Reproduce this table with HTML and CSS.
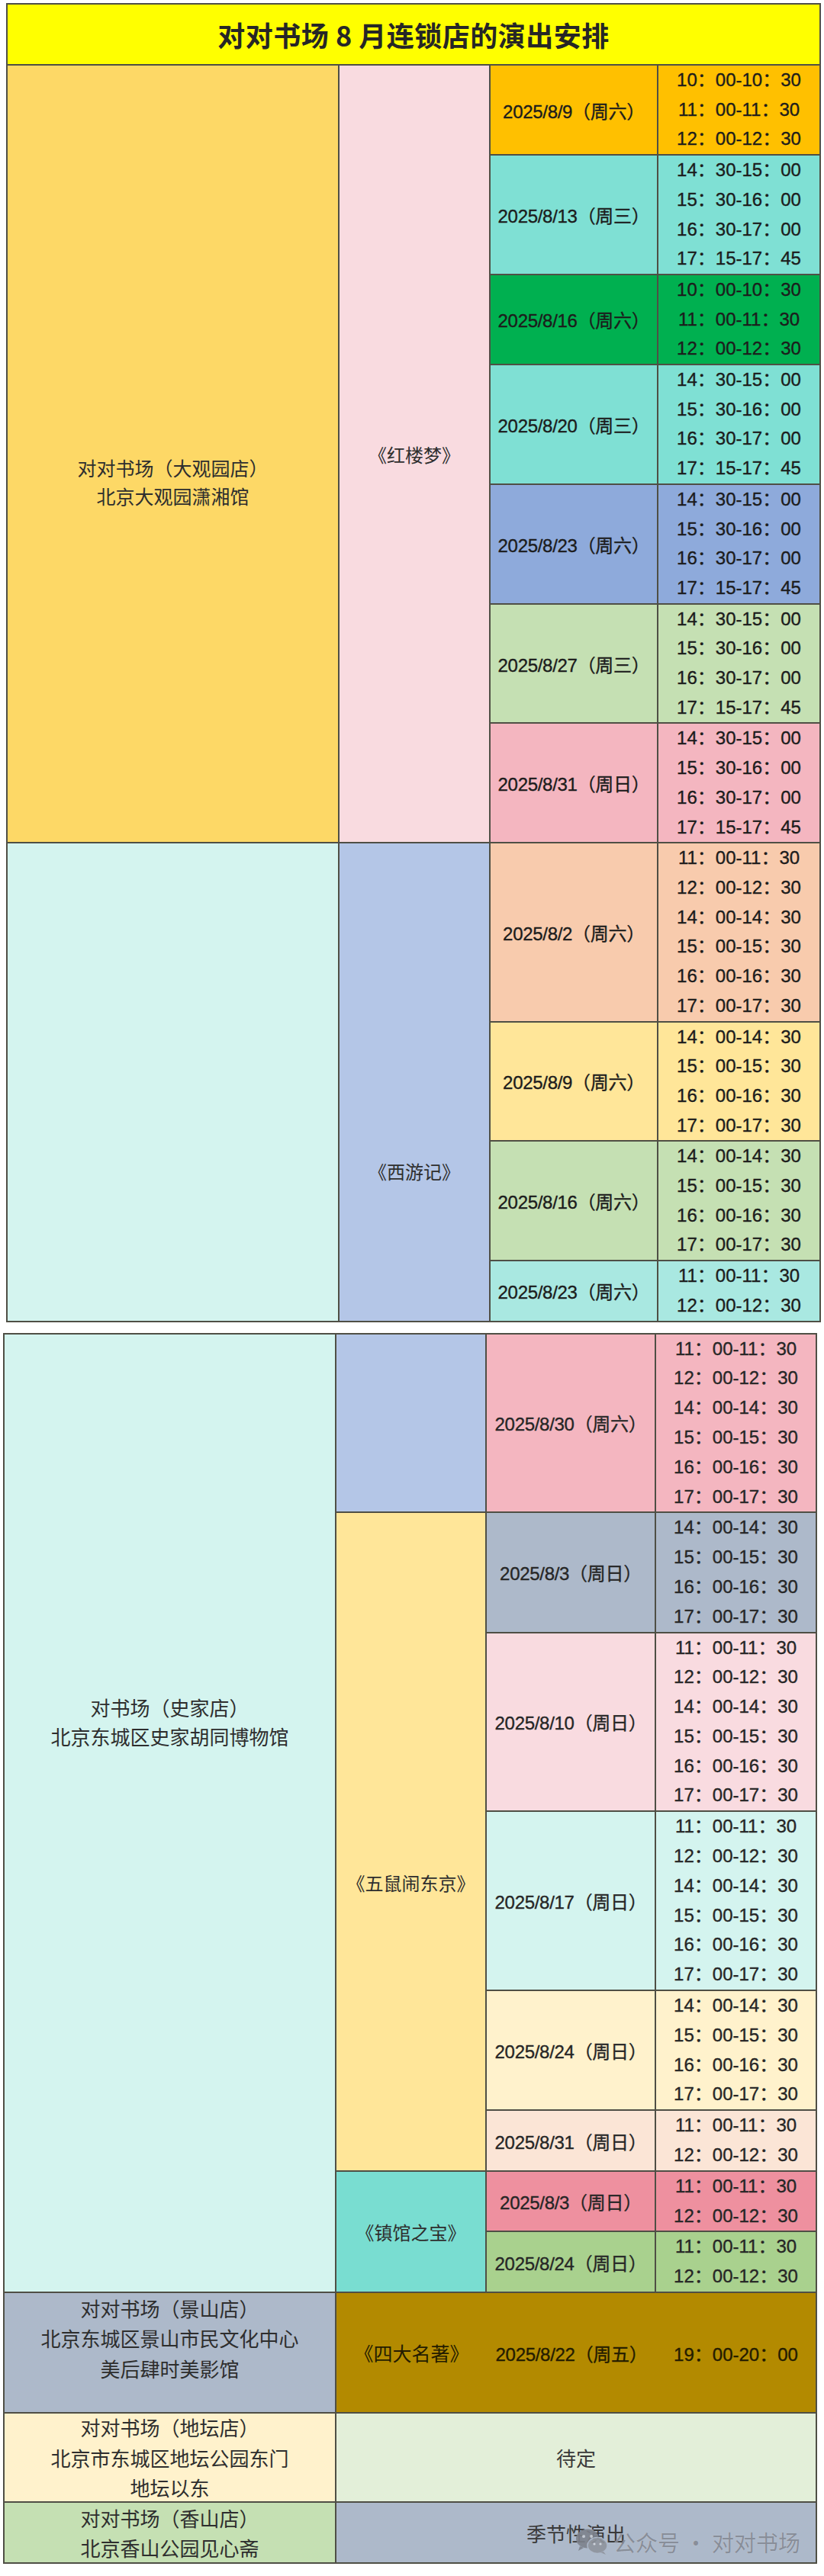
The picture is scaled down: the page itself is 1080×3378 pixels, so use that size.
FILE: index.html
```html
<!DOCTYPE html>
<html lang="zh-CN">
<head>
<meta charset="utf-8">
<title>对对书场 8 月连锁店的演出安排</title>
<link rel="stylesheet" href="styles.css">
</head>
<body>
<section class="table t1">
  <div class="title">对对书场 8 月连锁店的演出安排</div>

  <div class="store">
    <div class="c1 bg-gold store-dgy"><p>对对书场（大观园店）</p><p>北京大观园潇湘馆</p></div>
    <div class="shows">
      <div class="show">
        <div class="c2 bg-pink">《红楼梦》</div>
        <div class="dates">
          <div class="row r-orange"><div class="date">2025/8/9（周六）</div><div class="times"><span>10：00-10：30</span><span>11：00-11：30</span><span>12：00-12：30</span></div></div>
          <div class="row r-teal"><div class="date">2025/8/13（周三）</div><div class="times"><span>14：30-15：00</span><span>15：30-16：00</span><span>16：30-17：00</span><span>17：15-17：45</span></div></div>
          <div class="row r-green"><div class="date">2025/8/16（周六）</div><div class="times"><span>10：00-10：30</span><span>11：00-11：30</span><span>12：00-12：30</span></div></div>
          <div class="row r-teal"><div class="date">2025/8/20（周三）</div><div class="times"><span>14：30-15：00</span><span>15：30-16：00</span><span>16：30-17：00</span><span>17：15-17：45</span></div></div>
          <div class="row r-blue"><div class="date">2025/8/23（周六）</div><div class="times"><span>14：30-15：00</span><span>15：30-16：00</span><span>16：30-17：00</span><span>17：15-17：45</span></div></div>
          <div class="row r-lgreen"><div class="date">2025/8/27（周三）</div><div class="times"><span>14：30-15：00</span><span>15：30-16：00</span><span>16：30-17：00</span><span>17：15-17：45</span></div></div>
          <div class="row r-rose"><div class="date">2025/8/31（周日）</div><div class="times"><span>14：30-15：00</span><span>15：30-16：00</span><span>16：30-17：00</span><span>17：15-17：45</span></div></div>
        </div>
      </div>
    </div>
  </div>

  <div class="store">
    <div class="c1 bg-cyan"></div>
    <div class="shows">
      <div class="show">
        <div class="c2 bg-lblue xiyou">《西游记》</div>
        <div class="dates">
          <div class="row r-peach"><div class="date">2025/8/2（周六）</div><div class="times"><span>11：00-11：30</span><span>12：00-12：30</span><span>14：00-14：30</span><span>15：00-15：30</span><span>16：00-16：30</span><span>17：00-17：30</span></div></div>
          <div class="row r-yellow"><div class="date">2025/8/9（周六）</div><div class="times"><span>14：00-14：30</span><span>15：00-15：30</span><span>16：00-16：30</span><span>17：00-17：30</span></div></div>
          <div class="row r-lgreen"><div class="date">2025/8/16（周六）</div><div class="times"><span>14：00-14：30</span><span>15：00-15：30</span><span>16：00-16：30</span><span>17：00-17：30</span></div></div>
          <div class="row r-aqua"><div class="date">2025/8/23（周六）</div><div class="times"><span>11：00-11：30</span><span>12：00-12：30</span></div></div>
        </div>
      </div>
    </div>
  </div>
</section>

<section class="table t2">
  <div class="store">
    <div class="c1 bg-cyan store-sj"><p>对书场（史家店）</p><p>北京东城区史家胡同博物馆</p></div>
    <div class="shows">
      <div class="show">
        <div class="c2 bg-lblue"></div>
        <div class="dates">
          <div class="row r-rose"><div class="date">2025/8/30（周六）</div><div class="times"><span>11：00-11：30</span><span>12：00-12：30</span><span>14：00-14：30</span><span>15：00-15：30</span><span>16：00-16：30</span><span>17：00-17：30</span></div></div>
        </div>
      </div>
      <div class="show">
        <div class="c2 bg-yellow wushu">《五鼠闹东京》</div>
        <div class="dates">
          <div class="row r-slate"><div class="date">2025/8/3（周日）</div><div class="times"><span>14：00-14：30</span><span>15：00-15：30</span><span>16：00-16：30</span><span>17：00-17：30</span></div></div>
          <div class="row r-pink"><div class="date">2025/8/10（周日）</div><div class="times"><span>11：00-11：30</span><span>12：00-12：30</span><span>14：00-14：30</span><span>15：00-15：30</span><span>16：00-16：30</span><span>17：00-17：30</span></div></div>
          <div class="row r-cyan"><div class="date">2025/8/17（周日）</div><div class="times"><span>11：00-11：30</span><span>12：00-12：30</span><span>14：00-14：30</span><span>15：00-15：30</span><span>16：00-16：30</span><span>17：00-17：30</span></div></div>
          <div class="row r-cream"><div class="date">2025/8/24（周日）</div><div class="times"><span>14：00-14：30</span><span>15：00-15：30</span><span>16：00-16：30</span><span>17：00-17：30</span></div></div>
          <div class="row r-blush"><div class="date">2025/8/31（周日）</div><div class="times"><span>11：00-11：30</span><span>12：00-12：30</span></div></div>
        </div>
      </div>
      <div class="show">
        <div class="c2 bg-mint">《镇馆之宝》</div>
        <div class="dates">
          <div class="row r-coral"><div class="date">2025/8/3（周日）</div><div class="times"><span>11：00-11：30</span><span>12：00-12：30</span></div></div>
          <div class="row r-leaf"><div class="date">2025/8/24（周日）</div><div class="times"><span>11：00-11：30</span><span>12：00-12：30</span></div></div>
        </div>
      </div>
    </div>
  </div>

  <div class="store line-jingshan">
    <div class="c1 bg-slate store-js"><p>对对书场（景山店）</p><p>北京东城区景山市民文化中心</p><p>美后肆时美影馆</p></div>
    <div class="wide bg-ochre split">
      <div class="s-show">《四大名著》</div>
      <div class="s-date">2025/8/22（周五）</div>
      <div class="s-time">19：00-20：00</div>
    </div>
  </div>

  <div class="store line-ditan">
    <div class="c1 bg-cream store-3"><p>对对书场（地坛店）</p><p>北京市东城区地坛公园东门</p><p>地坛以东</p></div>
    <div class="wide bg-sage">待定</div>
  </div>

  <div class="store line-xiangshan">
    <div class="c1 bg-lgreen store-3"><p>对对书场（香山店）</p><p>北京香山公园见心斋</p></div>
    <div class="wide bg-slate">季节性演出</div>
  </div>

  <div class="watermark">
    <svg class="wm-icon" viewBox="0 0 44 36" width="44" height="36" aria-hidden="true">
      <ellipse cx="16" cy="14" rx="15" ry="12.5" fill="#7d828c"/>
      <path d="M6 24 L4 30 L11 26 Z" fill="#7d828c"/>
      <ellipse cx="29" cy="23" rx="13" ry="10.5" fill="#8f949d" stroke="#adb9ca" stroke-width="1.5"/>
      <path d="M37 31 L40 35 L33 32 Z" fill="#8f949d"/>
      <circle cx="11" cy="11" r="2" fill="#c9ced6"/>
      <circle cx="21" cy="11" r="2" fill="#c9ced6"/>
      <circle cx="25" cy="21" r="1.6" fill="#d3d7de"/>
      <circle cx="33" cy="21" r="1.6" fill="#d3d7de"/>
    </svg>
    <span class="wm-text">公众号 · 对对书场</span>
  </div>
</section>
</body>
</html>
```

FILE: styles.css
```css
* {
  box-sizing: border-box;
  margin: 0;
  padding: 0;
}

body {
  background: #ffffff;
  font-family: "Liberation Sans", "Noto Sans CJK SC", sans-serif;
  color: #1c1c1c;
  width: 1080px;
}

p {
  margin: 0;
}

/* ---------- tables ---------- */
.table {
  display: flex;
  flex-direction: column;
  gap: 2px;
  background: #4f4f45;
  border: 2px solid #4f4f45;
}

.t1 {
  width: 1068px;
  margin: 4px 0 0 8px;
}

.t2 {
  width: 1067px;
  margin: 14px 0 0 4px;
  position: relative;
  color: #262626;
}

.title {
  height: 78px;
  background: #ffff00;
  display: flex;
  align-items: center;
  justify-content: center;
  font-family: "Noto Sans CJK SC", "Liberation Sans", sans-serif;
  font-size: 36px;
  font-weight: bold;
  color: #262626;
  letter-spacing: 0.5px;
}

.store {
  display: flex;
  gap: 2px;
}

.c1 {
  width: 433px;
  flex: none;
  display: flex;
  flex-direction: column;
  align-items: center;
  justify-content: center;
  text-align: center;
  font-family: "Noto Sans CJK SC", sans-serif;
  font-size: 25px;
  line-height: 37px;
  color: #2e2e2e;
}

.shows {
  flex: 1;
  display: flex;
  flex-direction: column;
  gap: 2px;
}

.show {
  display: flex;
  gap: 2px;
}

.c2 {
  width: 196px;
  flex: none;
  display: flex;
  align-items: center;
  justify-content: center;
  font-family: "Noto Sans CJK SC", sans-serif;
  font-size: 24px;
  color: #2e2e2e;
}

.t2 .c2 {
  width: 195px;
}

.dates {
  flex: 1;
  display: flex;
  flex-direction: column;
  gap: 2px;
}

.row {
  display: flex;
  gap: 2px;
}

.date {
  width: 218px;
  flex: none;
  display: flex;
  align-items: center;
  justify-content: center;
  white-space: nowrap;
  font-size: 24px;
  letter-spacing: -0.3px;
  -webkit-text-stroke: 0.35px currentColor;
  background: var(--bg);
}

.t2 .date {
  width: 220px;
}

.times {
  flex: 1;
  display: flex;
  flex-direction: column;
  align-items: center;
  font-size: 24px;
  line-height: 38.7px;
  white-space: nowrap;
  -webkit-text-stroke: 0.35px currentColor;
  background: var(--bg);
}

.t2 .times {
  line-height: 38.8px;
}

/* text offsets inside merged cells */
.store-dgy {
  padding-top: 73px;
}

.xiyou {
  padding-top: 234px;
}

.store-sj {
  font-size: 26px;
  line-height: 38px;
  padding-bottom: 238px;
}

.wushu {
  padding-top: 106px;
}

/* bottom rows of table 2 */
.line-jingshan {
  height: 156px;
}

.line-ditan {
  height: 115px;
}

.line-xiangshan {
  height: 78px;
}

.store-js {
  font-size: 26px;
  line-height: 39.5px;
  padding-bottom: 38px;
}

.store-3 {
  font-size: 26px;
  line-height: 39.5px;
}

.wide {
  flex: 1;
  display: flex;
  align-items: center;
  justify-content: center;
  font-family: "Noto Sans CJK SC", sans-serif;
  font-size: 26px;
  color: #3a3a3a;
}

.split {
  justify-content: flex-start;
  color: #241c00;
}

.s-show {
  width: 197px;
  text-align: center;
  font-size: 25px;
}

.s-date {
  width: 222px;
  text-align: center;
  font-family: "Liberation Sans", "Noto Sans CJK SC", sans-serif;
  font-size: 24px;
  letter-spacing: -0.3px;
  -webkit-text-stroke: 0.35px currentColor;
  white-space: nowrap;
}

.s-time {
  flex: 1;
  text-align: center;
  font-family: "Liberation Sans", "Noto Sans CJK SC", sans-serif;
  font-size: 24px;
  -webkit-text-stroke: 0.35px currentColor;
  white-space: nowrap;
}

/* watermark */
.watermark {
  position: absolute;
  left: 748px;
  top: 1562px;
  display: flex;
  align-items: center;
  gap: 6px;
  opacity: 0.9;
}

.wm-icon {
  display: block;
}

.wm-text {
  font-family: "Noto Sans CJK SC", sans-serif;
  font-size: 29px;
  color: #858a94;
  text-shadow: 0 0 1px rgba(255, 255, 255, 0.5);
  white-space: nowrap;
}

/* ---------- colours ---------- */
.bg-gold { background: #fdd866; }
.bg-pink { background: #f9dbe0; }
.bg-cyan { background: #d4f4ef; }
.bg-lblue { background: #b4c6e7; }
.bg-yellow { background: #ffe699; }
.bg-mint { background: #79ddd1; }
.bg-slate { background: #adb9ca; }
.bg-ochre { background: #b38a00; }
.bg-cream { background: #fff2cc; }
.bg-sage { background: #e3efd9; }
.bg-lgreen { background: #c5e0b3; }

.r-orange { --bg: #ffc000; }
.r-teal { --bg: #7fe0d4; }
.r-green { --bg: #00b050; }
.r-blue { --bg: #8eaadb; }
.r-lgreen { --bg: #c5e0b3; }
.r-rose { --bg: #f4b6c0; }
.r-peach { --bg: #f8cbad; }
.r-yellow { --bg: #ffe699; }
.r-aqua { --bg: #a9e8e1; }
.r-slate { --bg: #adb9ca; }
.r-pink { --bg: #f9dbe0; }
.r-cyan { --bg: #d4f4ef; }
.r-cream { --bg: #fff2cc; }
.r-blush { --bg: #fbe5d6; }
.r-coral { --bg: #ee909f; }
.r-leaf { --bg: #a9d18e; }
```
